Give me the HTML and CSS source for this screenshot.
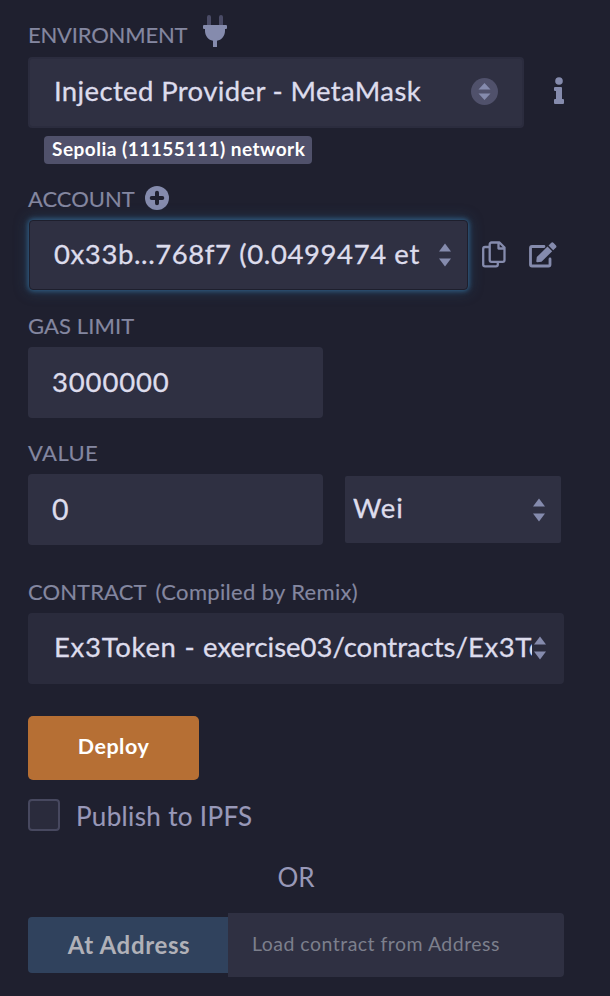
FILE: index.html
```html
<!DOCTYPE html>
<html lang="en">
<head>
<meta charset="utf-8">
<title>Deploy and run transactions</title>
<link rel="stylesheet" href="styles.css">
</head>
<body>
<main class="panel">
  <div class="label label-env"><span class="t-env">ENVIRONMENT</span>
    <svg class="plug" width="24" height="32" viewBox="0 0 24 32"><path fill="#4a4b66" d="M4 10V2a2 2 0 0 1 4 0v8zM16 10V2a2 2 0 0 1 4 0v8z"/><path fill="#858bad" d="M1 10h22a1 1 0 0 1 1 1v2a1 1 0 0 1-1 1h-1v2c0 5-3.500 9-8 9.800V32h-4v-6.200C5.500 25 2 21 2 16v-2H1a1 1 0 0 1-1-1v-2a1 1 0 0 1 1-1z"/></svg>
  </div>
  <div class="row">
    <div class="field env-select"><span class="value t-provider">Injected Provider - MetaMask</span>
      <svg class="round" width="27" height="27" viewBox="0 0 27 27"><circle cx="13.500" cy="13.500" r="13.500" fill="#50516b"/><path fill="#858bad" d="M13.500 5l6 6.500h-12zM7.500 15.500h12l-6 6.500z"/></svg>
    </div>
    <svg class="info" width="10" height="27" viewBox="0 0 10 27"><circle cx="5" cy="4" r="3.800" fill="#858bad"/><path fill="#858bad" d="M1 10h6a1 1 0 0 1 1 1v11h1a1 1 0 0 1 1 1v3a1 1 0 0 1-1 1H1a1 1 0 0 1-1-1v-3a1 1 0 0 1 1-1h1v-8H1a1 1 0 0 1-1-1v-2a1 1 0 0 1 1-1z"/></svg>
  </div>
  <div class="badge"><span class="t-badge">Sepolia (11155111) network</span></div>
  <div class="label label-account"><span class="t-account">ACCOUNT</span>
    <svg class="plus" width="24" height="24" viewBox="0 0 24 24"><circle cx="12" cy="12" r="12" fill="#858bad"/><path d="M12 6.700v10.600M6.700 12h10.600" stroke="#1f202f" stroke-width="4" stroke-linecap="round"/></svg>
  </div>
  <div class="row">
    <div class="field account-select"><span class="value t-address">0x33b...768f7 (0.0499474 et</span>
      <svg class="arrows" width="14" height="24" viewBox="0 0 14 24"><path fill="#858bad" d="M7 0.500L13 8.500H1zM1 15.500h12l-6 8z"/></svg>
    </div>
    <svg class="copy" width="24" height="27" viewBox="0 0 24 27"><path fill="none" stroke="#858bad" stroke-width="2.300" stroke-linejoin="round" d="M7 6H3a1.800 1.800 0 0 0-1.800 1.800v15.700A1.800 1.800 0 0 0 3 25.300h11a1.800 1.800 0 0 0 1.800-1.800V21M9.500 1.500H17.500L22.500 6.500V19a1.800 1.800 0 0 1-1.800 1.800H9.500A1.800 1.800 0 0 1 7.700 19V3.300A1.800 1.800 0 0 1 9.500 1.500zM16.500 1.500v6h6"/></svg>
    <svg class="edit" width="28" height="26" viewBox="0 0 28 26"><path fill="none" stroke="#858bad" stroke-width="2.800" stroke-linejoin="round" stroke-linecap="round" d="M15 4.500H3A1.500 1.500 0 0 0 1.500 6v16.500A1.500 1.500 0 0 0 3 24h16.500a1.500 1.500 0 0 0 1.500-1.500V17"/><path fill="#858bad" d="M18.500 4.500l4.700 4.700L12.500 19.800l-4.200.5a1 1 0 0 1-1-1l.5-4.200zM19.500 3.500l2.500-2.500a1.800 1.800 0 0 1 2.600 0l2.200 2.200a1.800 1.800 0 0 1 0 2.600l-2.600 2.400z"/></svg>
  </div>
  <div class="label label-gas"><span class="t-gas">GAS LIMIT</span></div>
  <div class="field number"><span class="value t-limit">3000000</span></div>
  <div class="label label-value"><span class="t-value">VALUE</span></div>
  <div class="row">
    <div class="field number"><span class="value t-zero">0</span></div>
    <div class="field unit"><span class="value t-wei">Wei</span>
      <svg class="arrows" width="14" height="24" viewBox="0 0 14 24"><path fill="#858bad" d="M7 0.500L13 8.500H1zM1 15.500h12l-6 8z"/></svg>
    </div>
  </div>
  <div class="label label-contract"><span class="t-contract">CONTRACT</span><span class="t-compiled">(Compiled by Remix)</span></div>
  <div class="field contract"><span class="value t-token"><span class="t-name">Ex3Token - </span>exercise03/contracts/<span class="t-file">Ex3To</span></span>
    <svg class="arrows" width="14" height="24" viewBox="0 0 14 24"><path fill="#858bad" d="M7 0.500L13 8.500H1zM1 15.500h12l-6 8z"/></svg>
  </div>
  <div class="deploy"><span class="t-deploy">Deploy</span></div>
  <div class="publish"><span class="box"></span><span class="t-publish">Publish to IPFS</span></div>
  <div class="or"><span class="t-or">OR</span></div>
  <div class="load">
    <div class="at"><span class="t-at">At Address</span></div>
    <div class="input"><span class="t-load">Load contract from Address</span></div>
  </div>
</main>
</body>
</html>
```

FILE: styles.css
```css
* { box-sizing: border-box; }
body {
  margin: 0;
  background: #1f202f;
  font-family: Lato, "Open Sans", sans-serif;
  color: #dddcec;
}
svg { display: block; flex: none; }
span { white-space: nowrap; }
.panel { height: 996px; padding: 13px 0 0 28px; overflow: hidden; }
.row { display: flex; align-items: center; }
.label {
  display: flex;
  align-items: center;
  height: 30px;
  font-size: 22px;
  line-height: 30px;
  color: #8487a0;
  -webkit-text-stroke: .15px;
}
.label-env { height: 44px; }
.t-env { letter-spacing: -.2px; }
.t-gas { letter-spacing: .1px; }
.t-value { letter-spacing: .4px; }
.t-contract { letter-spacing: .1px; }
.plug { margin: -8px 0 0 16px; }
.field {
  display: flex;
  align-items: center;
  height: 71px;
  padding-left: 24px;
  background: #2f3042;
  border-radius: 4px;
  font-size: 27.5px;
  line-height: 40px;
}
.value { overflow: hidden; padding-bottom: 2px; -webkit-text-stroke: .3px; }
.env-select { width: 496px; padding-left: 24px; border: 2px solid #2b2c3e; }
.t-provider { padding-bottom: 4px; letter-spacing: .37px; }
.round { margin: -3px 24px 0 auto; }
.info { margin: -4px 0 0 30px; }
.badge {
  width: 268px;
  height: 28px;
  margin: 8px 0 0 16px;
  padding-left: 8px;
  border-radius: 4px;
  background: #50516b;
  color: #fff;
  font-size: 19px;
  font-weight: 700;
  letter-spacing: .5px;
  line-height: 25px;
}
.label-account { margin-top: 20px; }
.plus { margin: -2px 0 0 10px; }
.account-select {
  width: 439px;
  height: 70px;
  margin: 6px 0 0 1px;
  border: 1px solid #1e1f2d;
  box-shadow: 0 0 5px 1px #2f6088, 0 0 14px 2px rgba(47, 96, 136, .35);
}
.t-address { letter-spacing: .6px; }
.arrows { margin: 0 15px 0 auto; }
.copy { margin: 4px 0 0 14px; }
.edit { margin: 6px 0 0 23px; }
.label-gas { margin: 21px 0 6px; }
.number { width: 295px; }
.t-limit { letter-spacing: .85px; }
.label-value { margin: 20px 0 6px; }
.t-zero { font-size: 28.500px; }
.unit { width: 216px; height: 67px; margin-left: 22px; padding-left: 8px; border-radius: 2px; }
.t-wei { padding-bottom: 4px; letter-spacing: .9px; }
.label-contract { margin: 32px 0 6px; }
.t-compiled { margin-left: 9px; letter-spacing: .33px; }
.contract { width: 536px; padding-left: 26px; background: #2a2b3c; }
.contract .value { width: 478px; padding-bottom: 4px; }
.t-name { letter-spacing: .7px; }
.t-file { letter-spacing: .6px; }
.contract .arrows { margin-right: 17px; margin-top: -1px; }
.deploy {
  display: flex;
  align-items: center;
  justify-content: center;
  width: 171px;
  height: 64px;
  margin-top: 32px;
  padding-bottom: 4px;
  border-radius: 5px;
  background: #b66f34;
  color: #fff;
  font-size: 21.500px;
  font-weight: 700;
  letter-spacing: .5px;
}
.publish {
  display: flex;
  align-items: center;
  height: 32px;
  margin-top: 19px;
  gap: 16px;
  color: #9898b8;
  font-size: 26px;
  letter-spacing: .35px;
  -webkit-text-stroke: .15px;
}
.t-publish { padding-top: 2px; }
.box { width: 32px; height: 32px; border: 2px solid #47485f; border-radius: 4px; background: #2a2b3c; }
.or {
  width: 536px;
  margin-top: 30px;
  text-align: center;
  color: #9898b8;
  font-size: 26px;
  line-height: 32px;
}
.load { display: flex; align-items: center; margin-top: 20px; }
.at {
  display: flex;
  align-items: center;
  justify-content: center;
  width: 200px;
  height: 56px;
  padding: 0 0 2px 2px;
  border-radius: 4px 0 0 4px;
  background: #30425d;
  color: #b0b1b8;
  font-size: 24px;
  font-weight: 700;
  letter-spacing: .65px;
}
.input {
  display: flex;
  align-items: center;
  width: 336px;
  height: 64px;
  padding: 0 0 3px 24px;
  border-radius: 0 4px 4px 0;
  background: #2f3042;
  color: #7c7f8c;
  font-size: 19.500px;
  letter-spacing: .48px;
}
```
